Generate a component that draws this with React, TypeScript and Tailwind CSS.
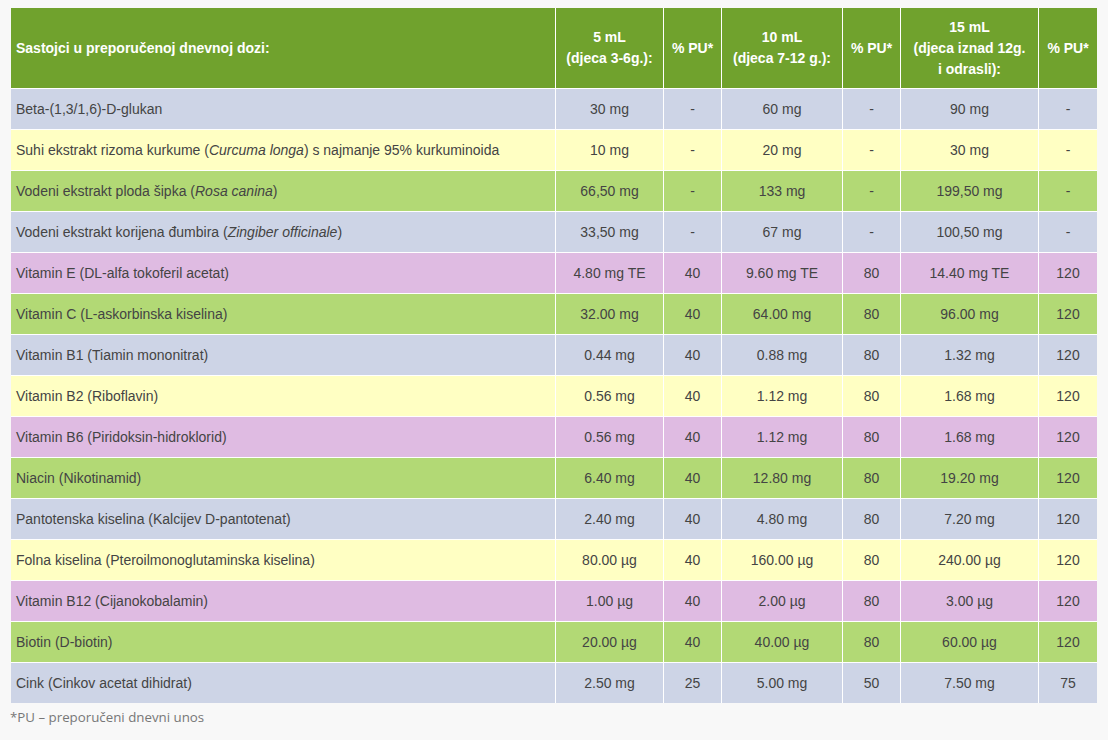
import type { ReactNode } from 'react'

type Row = {
  name: ReactNode
  v5: string
  p5: string
  v10: string
  p10: string
  v15: string
  p15: string
  tone: 'blue' | 'yellow' | 'green' | 'purple'
}

const TONES = {
  blue: 'bg-[#cdd4e6]',
  yellow: 'bg-[#ffffc3]',
  green: 'bg-[#b2d975]',
  purple: 'bg-[#dfbbe2]',
}

const ROWS: Row[] = [
  { name: 'Beta-(1,3/1,6)-D-glukan', v5: '30 mg', p5: '-', v10: '60 mg', p10: '-', v15: '90 mg', p15: '-', tone: 'blue' },
  {
    name: (
      <>
        Suhi ekstrakt rizoma kurkume (<i>Curcuma longa</i>) s najmanje 95% kurkuminoida
      </>
    ),
    v5: '10 mg', p5: '-', v10: '20 mg', p10: '-', v15: '30 mg', p15: '-', tone: 'yellow',
  },
  {
    name: (
      <>
        Vodeni ekstrakt ploda šipka (<i>Rosa canina</i>)
      </>
    ),
    v5: '66,50 mg', p5: '-', v10: '133 mg', p10: '-', v15: '199,50 mg', p15: '-', tone: 'green',
  },
  {
    name: (
      <>
        Vodeni ekstrakt korijena đumbira (<i>Zingiber officinale</i>)
      </>
    ),
    v5: '33,50 mg', p5: '-', v10: '67 mg', p10: '-', v15: '100,50 mg', p15: '-', tone: 'blue',
  },
  { name: 'Vitamin E (DL-alfa tokoferil acetat)', v5: '4.80 mg TE', p5: '40', v10: '9.60 mg TE', p10: '80', v15: '14.40 mg TE', p15: '120', tone: 'purple' },
  { name: 'Vitamin C (L-askorbinska kiselina)', v5: '32.00 mg', p5: '40', v10: '64.00 mg', p10: '80', v15: '96.00 mg', p15: '120', tone: 'green' },
  { name: 'Vitamin B1 (Tiamin mononitrat)', v5: '0.44 mg', p5: '40', v10: '0.88 mg', p10: '80', v15: '1.32 mg', p15: '120', tone: 'blue' },
  { name: 'Vitamin B2 (Riboflavin)', v5: '0.56 mg', p5: '40', v10: '1.12 mg', p10: '80', v15: '1.68 mg', p15: '120', tone: 'yellow' },
  { name: 'Vitamin B6 (Piridoksin-hidroklorid)', v5: '0.56 mg', p5: '40', v10: '1.12 mg', p10: '80', v15: '1.68 mg', p15: '120', tone: 'purple' },
  { name: 'Niacin (Nikotinamid)', v5: '6.40 mg', p5: '40', v10: '12.80 mg', p10: '80', v15: '19.20 mg', p15: '120', tone: 'green' },
  { name: 'Pantotenska kiselina (Kalcijev D-pantotenat)', v5: '2.40 mg', p5: '40', v10: '4.80 mg', p10: '80', v15: '7.20 mg', p15: '120', tone: 'blue' },
  { name: 'Folna kiselina (Pteroilmonoglutaminska kiselina)', v5: '80.00 µg', p5: '40', v10: '160.00 µg', p10: '80', v15: '240.00 µg', p15: '120', tone: 'yellow' },
  { name: 'Vitamin B12 (Cijanokobalamin)', v5: '1.00 µg', p5: '40', v10: '2.00 µg', p10: '80', v15: '3.00 µg', p15: '120', tone: 'purple' },
  { name: 'Biotin (D-biotin)', v5: '20.00 µg', p5: '40', v10: '40.00 µg', p10: '80', v15: '60.00 µg', p15: '120', tone: 'green' },
  { name: 'Cink (Cinkov acetat dihidrat)', v5: '2.50 mg', p5: '25', v10: '5.00 mg', p10: '50', v15: '7.50 mg', p15: '75', tone: 'blue' },
]

function HeadCell({ children, left }: { children: ReactNode; left?: boolean }) {
  return (
    <div
      className={`flex h-[80px] items-center bg-[#70a22d] px-[5px] text-[14px] leading-[21px] font-bold text-white ${
        left ? 'justify-start' : 'justify-center text-center'
      }`}
    >
      <span>{children}</span>
    </div>
  )
}

export default function App() {
  return (
    <div className="min-h-[740px] bg-[#f8f8f8] pt-[8px] pl-[11px]">
      <div
        className="grid w-[1086px] grid-cols-[544px_107px_57px_120px_57px_137px_58px] gap-px bg-white text-[14px] text-[#444]"
        style={{ fontFamily: '"Liberation Sans", Arial, sans-serif' }}
      >
        <HeadCell left>Sastojci u preporučenoj dnevnoj dozi:</HeadCell>
        <HeadCell>
          5 mL
          <br />
          (djeca 3-6g.):
        </HeadCell>
        <HeadCell>% PU*</HeadCell>
        <HeadCell>
          10 mL
          <br />
          (djeca 7-12 g.):
        </HeadCell>
        <HeadCell>% PU*</HeadCell>
        <HeadCell>
          15 mL
          <br />
          (djeca iznad 12g.
          <br />
          i odrasli):
        </HeadCell>
        <HeadCell>% PU*</HeadCell>

        {ROWS.map((row, i) => {
          const bg = TONES[row.tone]
          const cells = [row.v5, row.p5, row.v10, row.p10, row.v15, row.p15]
          return (
            <div key={i} className="contents">
              <div className={`flex h-[40px] items-center px-[5px] ${bg}`}>{row.name}</div>
              {cells.map((c, j) => (
                <div key={j} className={`flex items-center justify-center ${bg}`}>
                  {c}
                </div>
              ))}
            </div>
          )
        })}
      </div>
      <p
        className="mt-[5px] -ml-[1px] text-[13.3px] text-[#777]"
        style={{ fontFamily: '"Open Sans", sans-serif' }}
      >
        *PU – preporučeni dnevni unos
      </p>
    </div>
  )
}
